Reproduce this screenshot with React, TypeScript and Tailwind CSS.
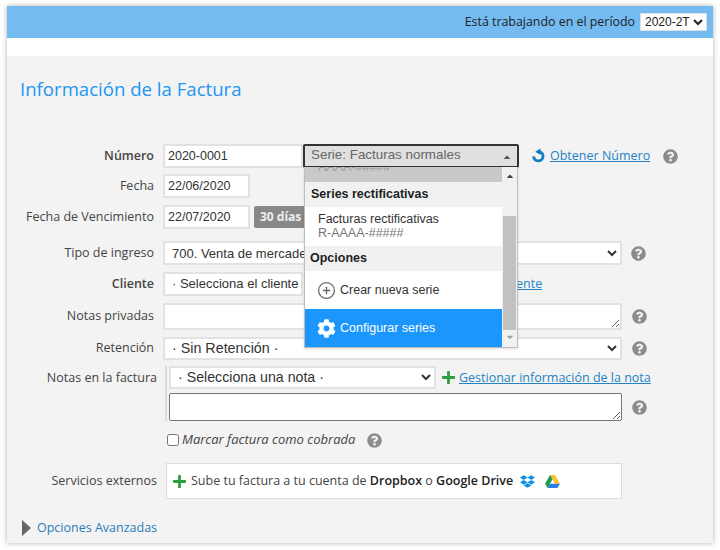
import type { ReactNode } from 'react'
import { clsx } from 'clsx'
import { CirclePlus } from 'lucide-react'
import { FaCaretDown, FaCaretUp, FaCog, FaDropbox, FaPlus, FaQuestionCircle } from 'react-icons/fa'

const OPEN_SANS = 'font-["Open_Sans",sans-serif]'
const ARIAL = 'font-["Liberation_Sans",Arial,sans-serif]'
const FIELD = 'h-full border-2 border-[#e2e2e2] bg-white text-[#333] outline-none'

function Help({ className }: { className?: string }) {
  return <FaQuestionCircle className={clsx('h-[15px] w-[15px] shrink-0 text-[#8c8c8c]', className)} />
}

function Row({ label, bold, className, children }: { label: string; bold?: boolean; className?: string; children: ReactNode }) {
  return (
    <div className={clsx('flex items-center', className)}>
      <label className={clsx('w-[147px] shrink-0 text-right text-[12.5px] text-[#444]', bold && 'font-semibold text-[#222]')}>{label}</label>
      <div className="ml-[9px] flex h-full min-w-0 flex-1 items-center">{children}</div>
    </div>
  )
}

function RefreshIcon() {
  return (
    <svg viewBox="0 0 16 16" className="ml-[12px] h-[16px] w-[15px] shrink-0">
      <path d="M9 3.4a5 5 0 1 1-6.2 5" fill="none" stroke="#137cc2" strokeWidth="3" />
      <path d="M4.5 3.4L10 0v7z" fill="#137cc2" />
    </svg>
  )
}

function DriveLogo() {
  return (
    <svg viewBox="0 0 24 21" className="ml-[10px] h-[13px] w-[15px]">
      <path d="M8 0h8l8 14h-8z" fill="#fbc02d" />
      <path d="M8 0l4 7-8 14-4-7z" fill="#1e9e4a" />
      <path d="M4 21l4-7h16l-4 7z" fill="#2a7de1" />
    </svg>
  )
}

function SeriesDropdown() {
  return (
    <div className={clsx('absolute left-[1px] top-[23px] z-10 flex h-[181px] w-[214px] border border-t-0 border-[#bdbdbd] bg-[#f1f1f1] text-[12.5px] text-[#333] shadow-sm', ARIAL)}>
      <div className="flex w-[198px] flex-col">
        <div className="h-[15px] overflow-hidden bg-[#c9c9c9] pl-[13px] leading-[14px] text-[#999]">
          <div className="-mt-[7px]">AAAA-#####</div>
        </div>
        <div className="flex h-[25px] items-center px-[6px] font-bold text-[#222]">Series rectificativas</div>
        <div className="h-[39px] bg-white pl-[13px] pt-[5px] leading-[14px]">
          <div>Facturas rectificativas</div>
          <div className="text-[#777]">R-AAAA-#####</div>
        </div>
        <div className="flex h-[25px] items-center px-[5px] font-bold text-[#222]">Opciones</div>
        <div className="flex h-[38px] items-center gap-[4px] bg-white pl-[12px]">
          <CirclePlus className="h-[19px] w-[19px] text-[#666]" strokeWidth={1.6} />
          <span>Crear nueva serie</span>
        </div>
        <div className="flex h-[38px] items-center gap-[4px] bg-[#1a96fc] pl-[12px] text-white">
          <FaCog className="h-[19px] w-[19px]" />
          <span>Configurar series</span>
        </div>
      </div>
      <div className="flex w-[15px] flex-col items-center">
        <FaCaretUp className="mt-[4px] h-[10px] w-[10px] text-[#444]" />
        <div className="mt-[35px] h-[114px] w-[13px] bg-[#c1c1c1]" />
        <FaCaretDown className="mt-[2px] h-[10px] w-[10px] text-[#a3a3a3]" />
      </div>
    </div>
  )
}

export default function App() {
  return (
    <div className={clsx('h-[550px] w-[720px] bg-white pl-[7px] pt-[6px]', OPEN_SANS)}>
      <div className="h-[537px] w-[706px] bg-[#f3f3f3] shadow-[0_0_5px_rgba(0,0,0,0.3)]">
        <header className="flex h-[32px] items-center justify-end gap-[5px] bg-[#74bbf2] pr-[6px] text-[12.4px] text-[#222]">
          <span>Está trabajando en el período</span>
          <select defaultValue="2020-2T" className={clsx('h-[18px] w-[67px] border border-[#ddd] bg-white text-[12px] text-[#222]', ARIAL)}>
            <option>2020-2T</option>
          </select>
        </header>
        <div className="h-[18px] bg-white" />

        <div className="pl-[13px] pt-[20px]">
          <h1 className="text-[18.6px] leading-[25px] text-[#2196f3]">Información de la Factura</h1>
        </div>

        <form className="pt-[43px]">
          <Row label="Número" bold className="h-[24px]">
            <input readOnly defaultValue="2020-0001" className={clsx(FIELD, ARIAL, 'w-[140px] px-[3px] text-[12.5px]')} />
            <div className="relative h-[24px] w-[216px]">
              <div className={clsx('flex h-full items-center justify-between rounded-[2px] border-2 border-[#333] bg-[#e0e0e0] pb-[2px] pl-[6px] pr-[5px] text-[13.4px] text-[#666]', ARIAL)}>
                <span>Serie: Facturas normales</span>
                <FaCaretUp className="mt-[4px] h-[10px] w-[10px] text-[#555]" />
              </div>
              <SeriesDropdown />
            </div>
            <RefreshIcon />
            <a href="#" className="ml-[4px] text-[12.5px] text-[#2383c4] underline">Obtener Número</a>
            <Help className="ml-[13px]" />
          </Row>
          <Row label="Fecha" className="mt-[6px] h-[24px]">
            <input readOnly defaultValue="22/06/2020" className={clsx(FIELD, ARIAL, 'w-[87px] px-[3px] text-[12.5px]')} />
          </Row>
          <Row label="Fecha de Vencimiento" className="mt-[7px] h-[24px]">
            <input readOnly defaultValue="22/07/2020" className={clsx(FIELD, ARIAL, 'w-[87px] px-[3px] text-[12.5px]')} />
            <span className="ml-[4px] flex h-[22px] w-[60px] items-center rounded-[2px] bg-[#888] pl-[6px] text-[12px] font-bold text-[#eee]">30 días</span>
          </Row>
          <Row label="Tipo de ingreso" className="mt-[12px] h-[24px]">
            <select defaultValue="700" className={clsx(FIELD, ARIAL, 'w-[459px] pl-[3px] text-[13px]')}>
              <option value="700">700. Venta de mercaderías</option>
            </select>
            <Help className="ml-[9px]" />
          </Row>
          <Row label="Cliente" bold className="mt-[7px] h-[24px]">
            <div className={clsx(FIELD, ARIAL, 'flex w-[140px] items-center overflow-hidden whitespace-nowrap pl-[7px] text-[13px]')}>· Selecciona el cliente ·</div>
            <a href="#" className="ml-[213px] text-[12.5px] text-[#2383c4] underline">ente</a>
          </Row>
          <Row label="Notas privadas" className="mt-[7px] h-[27px]">
            <textarea readOnly className={clsx(FIELD, 'w-[459px]')} />
            <Help className="ml-[10px]" />
          </Row>
          <Row label="Retención" className="mt-[7px] h-[23px]">
            <select defaultValue="none" className={clsx(FIELD, ARIAL, 'w-[459px] pb-[2px] pl-[3px] text-[14.3px]')}>
              <option value="none">· Sin Retención ·</option>
            </select>
            <Help className="ml-[10px]" />
          </Row>
          <div className="mt-[6px] flex h-[55px]">
            <label className="w-[150px] shrink-0 pt-[1px] text-right text-[12.5px] leading-[22px] text-[#444]">Notas en la factura</label>
            <div className="ml-[8px] flex-1 border-l-2 border-[#dcdcdc] pl-[2px]">
              <div className="flex h-[23px] items-center">
                <select defaultValue="none" className={clsx(FIELD, ARIAL, 'w-[267px] pb-[2px] pl-[3px] text-[14.2px]')}>
                  <option value="none">· Selecciona una nota ·</option>
                </select>
                <FaPlus className="ml-[5px] h-[15px] w-[15px] text-[#2e9e3e]" />
                <a href="#" className="ml-[3px] pt-[1px] text-[12.5px] text-[#2383c4] underline">Gestionar información de la nota</a>
              </div>
              <div className="mt-[4px] flex h-[28px] items-center">
                <textarea readOnly className="h-full w-[453px] rounded-[2px] border border-[#777] bg-white outline-none" />
                <Help className="ml-[10px]" />
              </div>
            </div>
          </div>
          <div className="ml-[160px] mt-[11px] flex h-[16px] items-center">
            <input type="checkbox" className="h-[12px] w-[12px]" />
            <span className="ml-[3px] text-[13px] italic text-[#444]">Marcar factura como cobrada</span>
            <Help className="ml-[12px]" />
          </div>
          <div className="mt-[15px] flex h-[36px] items-center">
            <label className="w-[150px] shrink-0 text-right text-[12.5px] text-[#444]">Servicios externos</label>
            <div className="ml-[9px] flex h-full w-[456px] items-center border border-[#dcdcdc] bg-white pl-[5px] text-[12.5px] text-[#444]">
              <FaPlus className="mr-[4px] h-[15px] w-[15px] text-[#2e9e3e]" />
              <span>Sube tu factura a tu cuenta de <b className="font-semibold text-[#222]">Dropbox</b> o <b className="font-semibold text-[#222]">Google Drive</b></span>
              <FaDropbox className="ml-[7px] h-[15px] w-[15px] text-[#0d8fe8]" />
              <DriveLogo />
            </div>
          </div>
          <div className="ml-[15px] mt-[20px] flex items-center">
            <svg viewBox="0 0 9 16" className="h-[16px] w-[9px]">
              <path d="M0 0l9 8-9 8z" fill="#666" />
            </svg>
            <a href="#" className="ml-[6px] text-[12.5px] text-[#2b7cb8]">Opciones Avanzadas</a>
          </div>
        </form>
      </div>
    </div>
  )
}
